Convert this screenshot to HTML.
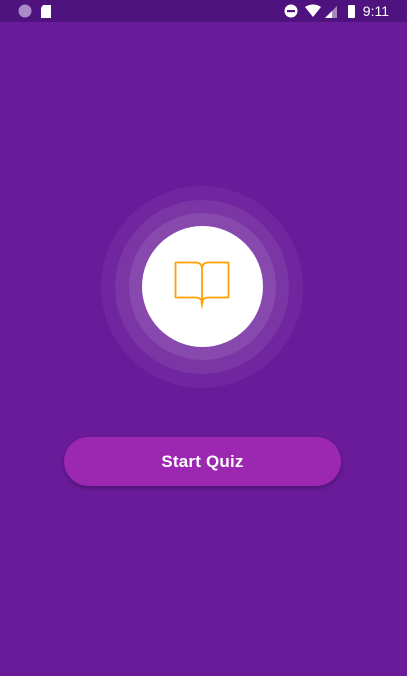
<!DOCTYPE html>
<html><head><meta charset="utf-8"><style>
html,body{margin:0;padding:0;width:407px;height:676px;overflow:hidden;background:#6a1b9a;font-family:"Liberation Sans",sans-serif}
.sb{position:absolute;left:0;top:0;width:407px;height:22px;background:#4f137f}
.c{position:absolute;border-radius:50%}
.btn{position:absolute;left:64px;top:437px;width:277px;height:49px;border-radius:25px;background:#9c27b0;box-shadow:0 2px 4px rgba(0,0,0,.3);color:#fff;font-size:17px;font-weight:bold;text-align:center;line-height:49px;letter-spacing:.2px}
.t{position:absolute;right:18px;top:3px;color:#fff;font-size:14px}
</style></head><body>
<div class="sb">
<svg width="407" height="22" style="position:absolute;left:0;top:0">
<circle cx="25" cy="11" r="6.5" fill="#a98bc9"/>
<path d="M43 5h8v13h-10v-10z" fill="#fff"/>
<circle cx="291" cy="11" r="6.5" fill="#fff"/><rect x="287" y="10" width="8" height="2.2" fill="#4f137f"/>
<path d="M305 7q8-5 16 0l-8 10z" fill="#fff"/>
<path d="M325 18l12-12v12z" fill="#fff" opacity=".5"/><path d="M325 18l7-7v7z" fill="#fff"/>
<rect x="348" y="5" width="7" height="13" rx="1" fill="#fff"/>
</svg>
<div class="t">9:11</div>
</div>
<div class="c" style="left:101px;top:186px;width:202px;height:202px;background:rgba(255,255,255,.05)"></div>
<div class="c" style="left:115px;top:200px;width:174px;height:174px;background:rgba(255,255,255,.07)"></div>
<div class="c" style="left:129px;top:213px;width:147px;height:147px;background:rgba(255,255,255,.1)"></div>
<div class="c" style="left:142px;top:226px;width:121px;height:121px;background:#fff"></div>
<svg width="60" height="56" style="position:absolute;left:172px;top:258px" viewBox="0 0 60 56">
<path d="M3.5 4.5h20q6.5 0 6.5 6.5q0-6.5 6.5-6.5h20v35h-20q-5 0-6.5 4q-1.5-4-6.5-4h-20z" fill="none" stroke="#ffa000" stroke-width="1.8" stroke-linejoin="round"/>
<path d="M30 11v33" stroke="#ffa000" stroke-width="1.8"/>
<path d="M28.5 43.5l1.5 8l1.5-8z" fill="#ffa000"/>
</svg>
<div class="btn">Start Quiz</div>
</body></html>
